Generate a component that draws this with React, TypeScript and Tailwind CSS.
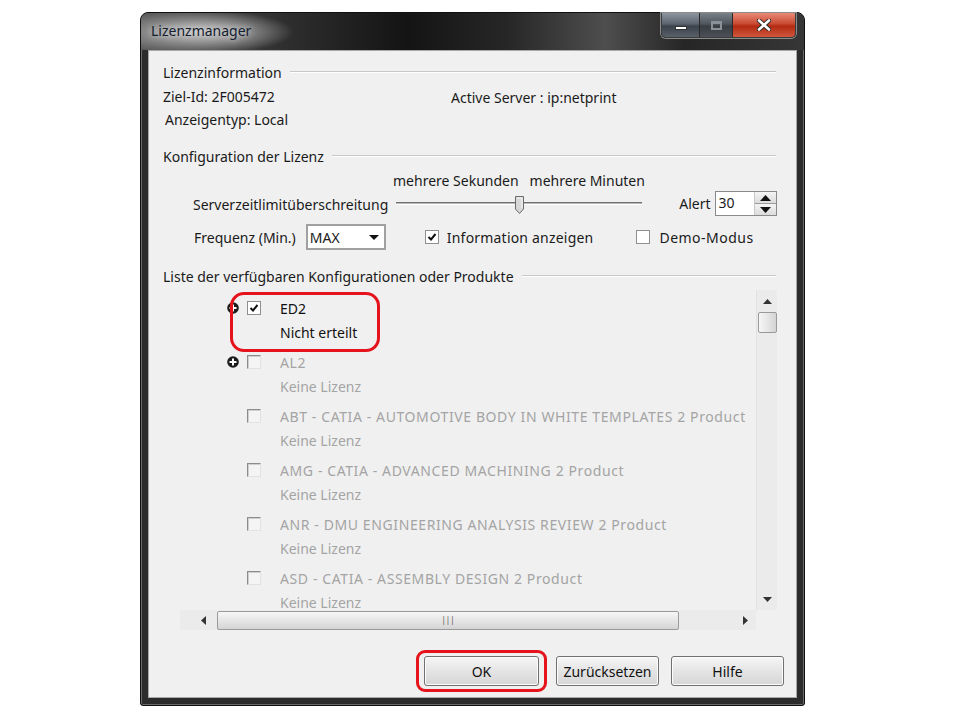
import React from 'react';

const FONT = "font-['Noto_Sans',sans-serif]";

function CheckBox({ checked = false, disabled = false }: { checked?: boolean; disabled?: boolean }) {
  if (disabled) {
    return (
      <div className="w-[14px] h-[14px] shrink-0 border border-t-[#8c8c8c] border-l-[#8c8c8c] border-b-[#e2e2e2] border-r-[#e2e2e2] bg-[#f4f4f4] shadow-[inset_1px_1px_0_#d0d0d0]" />
    );
  }
  return (
    <div className="w-[14px] h-[14px] shrink-0 border border-[#8e8f8f] bg-white flex items-center justify-center">
      {checked && (
        <svg width="10" height="10" viewBox="0 0 10 10">
          <path d="M1.5 5 L4 7.5 L8.5 2" fill="none" stroke="#111" strokeWidth="2" />
        </svg>
      )}
    </div>
  );
}

function GroupHeader({ title }: { title: string }) {
  return (
    <div className="h-[20px] flex items-center pr-[20px]">
      <span className="text-[14px] text-[#1a1a1a] whitespace-nowrap">{title}</span>
      <div className="flex-1 ml-[8px] h-[2px] border-t border-[#c8c8c8] border-b border-b-white" />
    </div>
  );
}

function PlusIcon() {
  return (
    <svg width="12" height="12" viewBox="0 0 12 12">
      <circle cx="6" cy="6" r="5.8" fill="#1c1c1c" />
      <path d="M6 2.5 V9.5 M2.5 6 H9.5" stroke="#fff" strokeWidth="2" />
    </svg>
  );
}

const products = [
  { name: 'AL2', plus: true },
  { name: 'ABT - CATIA - AUTOMOTIVE BODY IN WHITE TEMPLATES 2 Product' },
  { name: 'AMG - CATIA - ADVANCED MACHINING 2 Product' },
  { name: 'ANR - DMU ENGINEERING ANALYSIS REVIEW 2 Product' },
  { name: 'ASD - CATIA - ASSEMBLY DESIGN 2 Product' },
];

function Button({ label }: { label: string }) {
  return (
    <div className="h-full w-full border border-[#707070] rounded-[3px] bg-[linear-gradient(#f6f6f6,#e4e4e4_50%,#d6d6d6)] flex items-center justify-center text-[14px] text-[#111] shadow-[inset_0_0_0_1px_#fcfcfc]">
      {label}
    </div>
  );
}

export default function App() {
  return (
    <div className={`w-[960px] h-[720px] bg-white pt-[12px] pl-[140px] ${FONT}`}>
      {/* window frame */}
      <div className="w-[665px] h-[694px] rounded-t-[8px] rounded-b-[3px] border border-[#101010] bg-[#2c2c2c] flex flex-col shadow-[inset_0_0_0_1px_#6a6a6a]">
        {/* title bar */}
        <div className="h-[37px] flex items-start rounded-t-[7px] bg-[radial-gradient(ellipse_95px_22px_at_58px_19px,#c4c4c4,#9a9a9a_40%,transparent_100%),linear-gradient(90deg,#5a5a5a_0%,#2e2e2e_22%,#141414_40%,#262626_55%,#4e4e4e_70%,#262626_82%,#363636_100%)]">
          <div className="pl-[10px] pt-[7px] text-[14px] text-[#142030] [text-shadow:0_0_6px_#e8e8e8]">Lizenzmanager</div>
          <div className="ml-auto mr-[8px] flex h-[25px] rounded-b-[5px] border border-t-0 border-[#3c3c3c] overflow-hidden shadow-[0_0_0_1px_#8a8a8a]">
            <div className="w-[38px] h-full bg-[linear-gradient(#8e96a0,#5b6470_45%,#3a424c_55%,#5a6068)] flex items-center justify-center border-r border-[#2a2a2a]">
              <div className="w-[12px] h-[4px] bg-white border border-[#333] mt-[6px]" />
            </div>
            <div className="w-[33px] h-full bg-[linear-gradient(#7a8088,#50565e_45%,#383d44_55%,#4c5158)] flex items-center justify-center border-r border-[#2a2a2a]">
              <div className="w-[11px] h-[9px] border-2 border-[#8a9098] border-t-[3px]" />
            </div>
            <div className="w-[62px] h-full bg-[linear-gradient(#e88a78,#c94a32_45%,#b22a12_55%,#d0583c)] flex items-center justify-center">
              <svg width="14" height="12" viewBox="0 0 14 12">
                <path d="M2 1.5 L12 10.5 M12 1.5 L2 10.5" stroke="#2a2a2a" strokeWidth="4.4" strokeLinecap="round" />
                <path d="M2 1.5 L12 10.5 M12 1.5 L2 10.5" stroke="#fff" strokeWidth="2.6" strokeLinecap="round" />
              </svg>
            </div>
          </div>
        </div>

        {/* client area */}
        <div className="mx-[7px] mb-[7px] flex-1 border border-[#a8a8a8] bg-[#f0f0f0] flex flex-col pl-[14px] text-[14px] text-[#1a1a1a] relative">
          <div className="mt-[11px]">
            <GroupHeader title="Lizenzinformation" />
          </div>
          <div className="mt-[4px] h-[20px] flex items-center">
            <span className="w-[288px]">Ziel-Id: 2F005472</span>
            <span className="mt-[2px]">Active Server : ip:netprint</span>
          </div>
          <div className="mt-[3px] h-[20px] flex items-center pl-[2px]">Anzeigentyp: Local</div>

          <div className="mt-[17px]">
            <GroupHeader title="Konfiguration der Lizenz" />
          </div>
          <div className="mt-[4px] h-[20px] flex items-center pl-[230px] gap-[11px]">
            <span>mehrere Sekunden</span>
            <span>mehrere Minuten</span>
          </div>
          <div className="mt-[1px] h-[25px] flex items-center pl-[30px]">
            <span className="mt-[2px]">Serverzeitlimitüberschreitung</span>
            {/* slider */}
            <div className="ml-[8px] w-[246px] h-[20px] relative flex items-center">
              <div className="w-full h-[3px] border-t border-[#707070] border-b border-b-white bg-[#b8b8b8]" />
              <svg className="absolute left-[119px] top-[2px]" width="9" height="18" viewBox="0 0 9 18">
                <path d="M0.5 0.5 H8.5 V13 L4.5 17.5 L0.5 13 Z" fill="#d8d8d8" stroke="#6a6a6a" />
                <path d="M2 2 H7 V12" fill="none" stroke="#f8f8f8" />
              </svg>
            </div>
            <span className="ml-[37px]">Alert</span>
            <div className="ml-[4px] w-[62px] h-[25px] border border-[#8a8a8a] bg-white flex">
              <span className="flex-1 pl-[3px] leading-[22px]">30</span>
              <div className="w-[22px] flex flex-col border-l border-[#c8c8c8]">
                <div className="flex-1 bg-[linear-gradient(#f4f4f4,#dcdcdc)] border-b border-[#9a9a9a] flex items-center justify-center">
                  <svg width="11" height="6" viewBox="0 0 11 6"><path d="M0 6 L5.5 0 L11 6 Z" fill="#111" /></svg>
                </div>
                <div className="flex-1 bg-[linear-gradient(#f4f4f4,#dcdcdc)] flex items-center justify-center">
                  <svg width="11" height="6" viewBox="0 0 11 6"><path d="M0 0 L5.5 6 L11 0 Z" fill="#111" /></svg>
                </div>
              </div>
            </div>
          </div>
          <div className="mt-[8px] h-[26px] flex items-center pl-[31px]">
            <span>Frequenz (Min.)</span>
            <div className="ml-[10px] w-[80px] h-[26px] border-2 border-[#a0a0a0] bg-white flex items-center">
              <span className="flex-1 pl-[2px]">MAX</span>
              <div className="w-[20px] h-full flex items-center justify-center">
                <svg width="10" height="5" viewBox="0 0 10 5"><path d="M0 0 L5 5 L10 0 Z" fill="#111" /></svg>
              </div>
            </div>
            <div className="ml-[39px]"><CheckBox checked /></div>
            <span className="ml-[8px] tracking-[0.2px]">Information anzeigen</span>
            <div className="ml-[43px]"><CheckBox /></div>
            <span className="ml-[9px] tracking-[0.5px]">Demo-Modus</span>
          </div>

          <div className="mt-[16px]">
            <GroupHeader title="Liste der verfügbaren Konfigurationen oder Produkte" />
          </div>

          {/* list */}
          <div className="mt-[4px] ml-[17px] mr-[19px] h-[340px] flex flex-col">
            <div className="flex-1 flex min-h-0">
              <div className="flex-1 overflow-hidden pt-[6px] pl-[47px] relative">
                <div className="h-[54px]">
                  <div className="h-[24px] flex items-center">
                    <div className="w-[12px] h-[12px] overflow-hidden"><PlusIcon /></div>
                    <div className="ml-[8px]"><CheckBox checked /></div>
                    <span className="ml-[19px] text-[#111]">ED2</span>
                  </div>
                  <div className="h-[24px] flex items-center pl-[53px] text-[#111]">Nicht erteilt</div>
                </div>
                {products.map((p) => (
                  <div key={p.name} className="h-[54px]">
                    <div className="h-[24px] flex items-center">
                      <div className="w-[12px] h-[12px]">{p.plus && <PlusIcon />}</div>
                      <div className="ml-[8px]"><CheckBox disabled /></div>
                      <span className="ml-[19px] text-[#a4a4a4] whitespace-nowrap tracking-[0.6px]">{p.name}</span>
                    </div>
                    <div className="h-[24px] flex items-center pl-[53px] text-[#a4a4a4]">Keine Lizenz</div>
                  </div>
                ))}
                {/* red annotation around ED2 */}
                <div className="absolute left-[50px] top-[2px] w-[150px] h-[60px] border-[3px] border-[#e5141c] rounded-[14px]" />
              </div>
              {/* vertical scrollbar */}
              <div className="w-[21px] bg-[#ebebeb] border-l border-[#e2e2e2] flex flex-col items-center">
                <div className="h-[22px] flex items-center justify-center">
                  <svg width="9" height="5" viewBox="0 0 9 5"><path d="M0 5 L4.5 0 L9 5 Z" fill="#333" /></svg>
                </div>
                <div className="w-[19px] h-[21px] rounded-[2px] border border-[#9a9a9a] bg-[linear-gradient(90deg,#f6f6f6,#e6e6e6_50%,#d4d4d4)]" />
                <div className="flex-1" />
                <div className="h-[22px] flex items-center justify-center">
                  <svg width="9" height="5" viewBox="0 0 9 5"><path d="M0 0 L4.5 5 L9 0 Z" fill="#333" /></svg>
                </div>
              </div>
            </div>
            {/* horizontal scrollbar */}
            <div className="h-[20px] flex items-center bg-[#ebebeb] mr-[21px] pl-[21px]">
              <svg width="5" height="9" viewBox="0 0 5 9"><path d="M5 0 L0 4.5 L5 9 Z" fill="#333" /></svg>
              <div className="ml-[11px] w-[462px] h-[19px] rounded-[2px] border border-[#9a9a9a] bg-[linear-gradient(#f6f6f6,#e6e6e6_50%,#d4d4d4)] flex items-center justify-center">
                <span className="text-[8px] leading-none tracking-[0px] text-[#555]">|||</span>
              </div>
              <div className="flex-1" />
              <svg className="mr-[8px]" width="5" height="9" viewBox="0 0 5 9"><path d="M0 0 L5 4.5 L0 9 Z" fill="#333" /></svg>
            </div>
          </div>

          {/* buttons */}
          <div className="mt-[26px] h-[30px] flex">
            <div className="ml-[261px] w-[115px] h-full relative">
              <Button label="OK" />
              <div className="absolute -left-[8px] -top-[6px] w-[131px] h-[42px] border-[3px] border-[#e5141c] rounded-[9px]" />
            </div>
            <div className="ml-[17px] w-[103px] h-full"><Button label="Zurücksetzen" /></div>
            <div className="ml-[12px] w-[113px] h-full"><Button label="Hilfe" /></div>
          </div>
        </div>
      </div>
    </div>
  );
}
